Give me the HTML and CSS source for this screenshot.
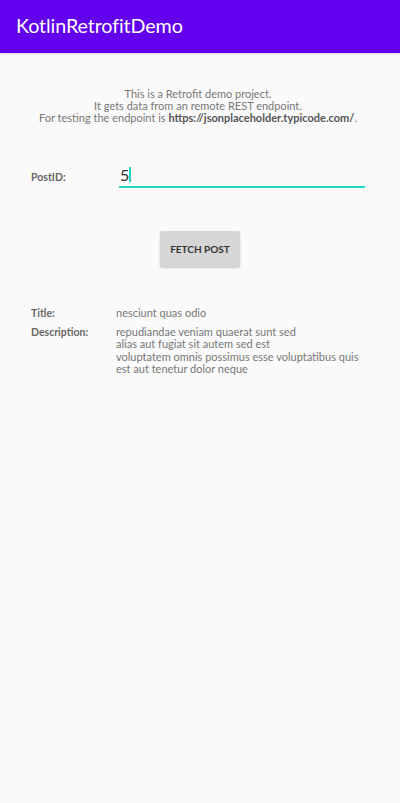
FILE: index.html
```html
<!DOCTYPE html>
<html>
<head>
<meta charset="utf-8">
<link rel="stylesheet" href="styles.css">
</head>
<body>
<header class="appbar"><h1 class="appbar-title">KotlinRetrofitDemo</h1></header>
<main class="content">
  <p class="intro">This is a Retrofit demo project.<br>It gets data from an remote REST endpoint.<br>For testing the endpoint is <b>https://jsonplaceholder.typicode.com/</b>.</p>
  <div class="postid-row">
    <span class="label">PostID:</span>
    <div class="field"><span class="field-value">5</span><span class="cursor"></span></div>
  </div>
  <div class="btn-row"><button class="btn">FETCH POST</button></div>
  <div class="details">
    <span class="label">Title:</span>
    <span class="value">nesciunt quas odio</span>
    <span class="label">Description:</span>
    <span class="value">repudiandae veniam quaerat sunt sed<br>alias aut fugiat sit autem sed est<br>voluptatem omnis possimus esse voluptatibus quis<br>est aut tenetur dolor neque</span>
  </div>
</main>
</body>
</html>
```
FILE: styles.css
```css
* { box-sizing: border-box; }
html, body { margin: 0; padding: 0; }
body {
  width: 400px;
  height: 803px;
  background: #fafafa;
  font-family: Lato, "Noto Sans", sans-serif;
  color: #757575;
}
.appbar {
  height: 53px;
  background: #6200ee;
  display: flex;
  align-items: center;
  padding: 0 16px 2px;
  box-shadow: 0 1px 2px rgba(0,0,0,0.15);
}
.appbar-title {
  margin: 0;
  color: #fff;
  font-size: 19.7px;
  font-weight: 400;
  letter-spacing: -0.1px;
}
.content { padding: 0 35px 0 31px; }
.intro {
  margin: 35px -31px 0 -31px;
  text-align: center;
  font-size: 11px;
  line-height: 12.2px;
  color: #777;
  white-space: nowrap;
}
.intro b { color: #555; font-weight: 700; }
.postid-row {
  display: flex;
  align-items: flex-end;
  margin-top: 39px;
}
.label {
  font-size: 10.5px;
  font-weight: 700;
  color: #666;
}
.postid-row .label { width: 88px; padding-bottom: 5px; }
.field {
  flex: 1;
  height: 24px;
  border-bottom: 2px solid #1fd6c4;
  display: flex;
  align-items: center;
  padding-left: 1px;
}
.field-value { font-size: 16px; color: #333; line-height: 1; }
.cursor { width: 2px; height: 15px; background: #1fd6c4; margin-left: 0; }
.btn-row { display: flex; justify-content: center; margin-top: 43px; padding-left: 4px; }
.btn {
  width: 80px;
  height: 36px;
  border: 0;
  border-radius: 2px;
  background: #d6d6d6;
  box-shadow: 0 1px 2px rgba(0,0,0,0.2);
  font-family: inherit;
  font-size: 10px;
  font-weight: 700;
  color: #333;
  padding: 0;
}
.details {
  display: grid;
  grid-template-columns: 85px 1fr;
  row-gap: 7px;
  margin-top: 40px;
  font-size: 11px;
  line-height: 12.3px;
  white-space: nowrap;
}
.details .value { color: #777; }
```
